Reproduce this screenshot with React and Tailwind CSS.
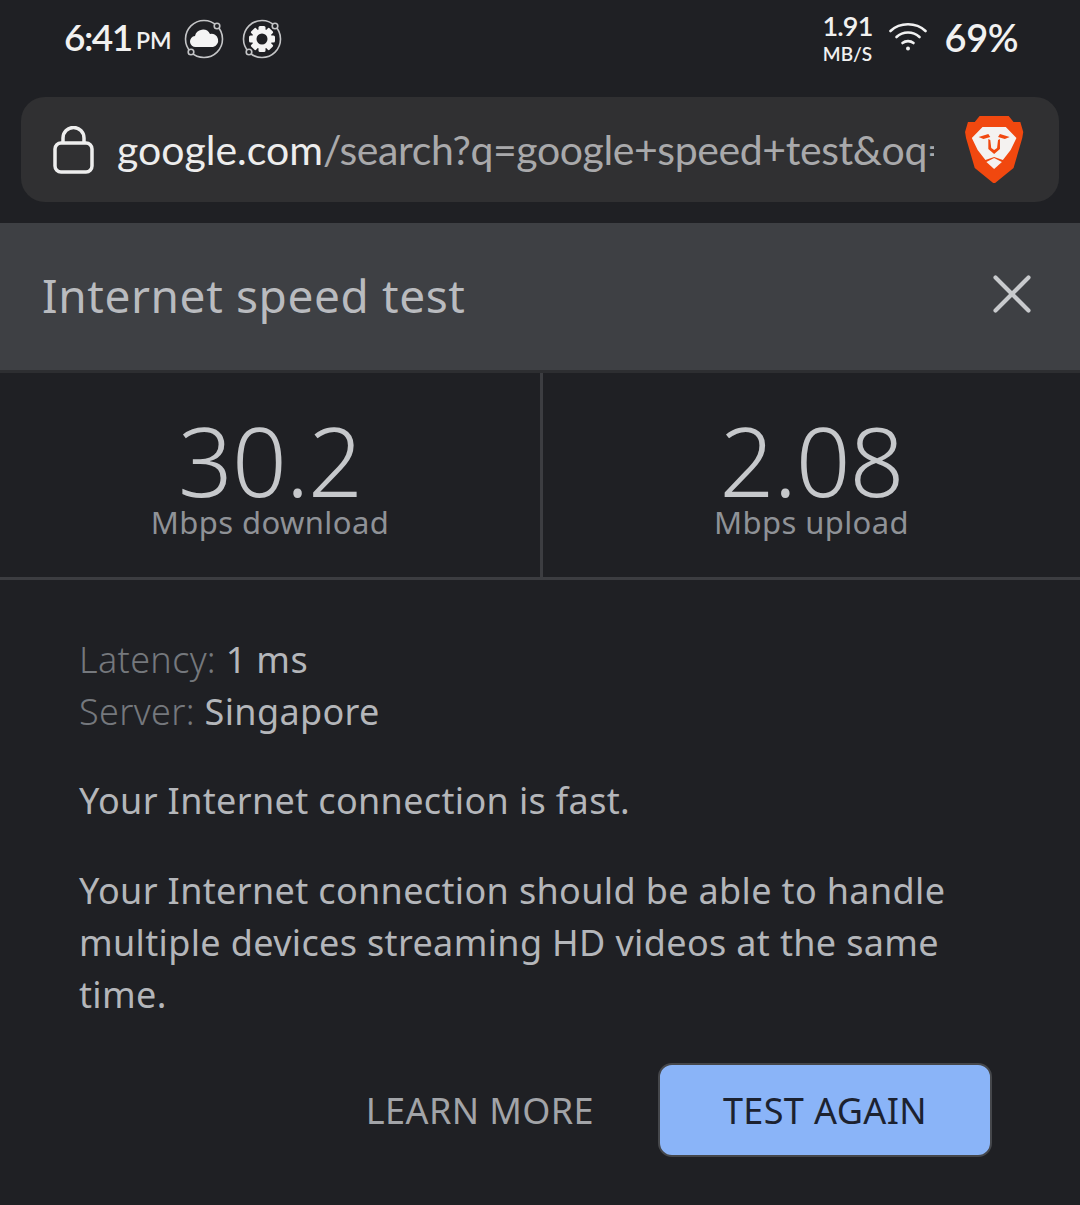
import React from 'react'
import { X } from 'lucide-react'

const Orbit = ({ children }) => (
  <svg width="42" height="42" viewBox="0 0 42 42" fill="none">
    <circle cx="21" cy="21" r="18.500" stroke="#c4c5c7" strokeWidth="1.600" />
    <circle cx="34" cy="8" r="2.800" fill="#1f2024" stroke="#c4c5c7" strokeWidth="1.600" />
    <circle cx="8" cy="34" r="2.800" fill="#1f2024" stroke="#c4c5c7" strokeWidth="1.600" />
    {children}
  </svg>
)

const GearIcon = () => (
  <g fill="#f4f4f4">
    {[0, 45, 90, 135].map((deg) => (
      <rect key={deg} x="17.500" y="8" width="7" height="26" rx="1.500" transform={`rotate(${deg} 21 21)`} />
    ))}
    <circle cx="21" cy="21" r="10" />
    <circle cx="21" cy="21" r="5.500" fill="#1f2024" />
  </g>
)

const BraveLogo = () => (
  <svg width="70" height="80" viewBox="0 0 70 80">
    <g transform="translate(0.200 0) scale(0.970 1)">
      <path d="M20 6H50L55 12H62L65 22L64 28L55 58L36 73H34L15 58L6 28L5 22L8 12H15Z" fill="#f1480f" />
      <path d="M23 17H47L58 28L52 40L44 50L35 47L26 50L18 40L12 28Z" fill="#f4f2f0" />
      <path d="M19 27L29 24L31 27L24 29ZM51 27L41 24L39 27L46 29ZM29 29L31 30L32 38L35 40L38 38L39 30L41 29L41 39L35 44L29 39Z" fill="#f1480f" />
      <path d="M27 52L35 48L43 52L35 59Z" fill="#f4f2f0" />
    </g>
  </svg>
)

const Stat = ({ value, label }) => (
  <div className="flex flex-col items-center pt-[39px]">
    <div className="text-[96px] leading-[96px] font-light tracking-[-1px] text-[#c6c8cb]">{value}</div>
    <div className="text-[31px] leading-[28px] tracking-[0.4px] text-[#8f9297]">{label}</div>
  </div>
)

export default function App() {
  return (
    <div className="w-[1080px] h-[1205px] overflow-hidden bg-[#1f2024] font-['Noto_Sans',sans-serif]">
      {/* status bar */}
      <div className="h-[97px] pl-[64px] pr-[62px] flex justify-between items-start text-[#f1f1f1] font-['Lato',sans-serif]">
        <div className="flex items-center pt-[12px]">
          <span className="w-[66px] text-[37px] leading-[44px] font-semibold tracking-[-1.5px] whitespace-nowrap">6:41</span>
          <span className="w-[35px] ml-[6px] mt-[6px] text-[23px] leading-[44px] font-semibold whitespace-nowrap">PM</span>
          <div className="ml-[12px] mt-[3px]">
            <Orbit>
              <path d="M13 29a5.500 5.500 0 0 1-1-11a8 8 0 0 1 15-2a6.500 6.500 0 0 1 3 13z" fill="#f4f4f4" />
            </Orbit>
          </div>
          <div className="ml-[16px] mt-[3px]">
            <Orbit>
              <GearIcon />
            </Orbit>
          </div>
        </div>
        <div className="flex items-start">
          <div className="flex flex-col items-center pt-[12px]">
            <span className="text-[27px] leading-[28px] font-semibold tracking-[-0.8px]">1.91</span>
            <span className="text-[19px] leading-[28px] font-semibold">MB/S</span>
          </div>
          <svg className="ml-[16px] mt-[21px]" width="38" height="30" viewBox="0 0 38 30" fill="none" stroke="#f1f1f1" strokeWidth="2.600" strokeLinecap="round">
            <path d="M1.500 10C11 1 27 1 36.500 10" />
            <path d="M7.500 16C14 10 24 10 30.500 16" />
            <path d="M13.500 22C16.500 19.500 21.500 19.500 24.500 22" />
            <circle cx="19" cy="27.500" r="2" fill="#f1f1f1" stroke="none" />
          </svg>
          <span className="ml-[18px] mt-[15px] text-[38px] leading-[44px] font-semibold tracking-[-0.5px]">69%</span>
        </div>
      </div>

      {/* url bar */}
      <div className="mx-[21px] h-[105px] rounded-[24px] bg-[#303032] flex items-center pl-[32px] pr-[29px]">
        <svg width="42" height="48" viewBox="0 0 42 48" fill="none" stroke="#eeeeee" strokeWidth="3.500" strokeLinejoin="round">
          <rect x="2" y="17" width="37" height="29" rx="6" />
          <path d="M10 17v-5a10.500 10.500 0 0 1 21 0v5" />
        </svg>
        <div className="ml-[22px] w-[817px] overflow-hidden whitespace-nowrap text-[41px] leading-[50px] tracking-[-0.4px] font-['Lato',sans-serif] text-[#a9a9ab]">
          <span className="text-[#ededed] tracking-[0px]">google.com</span>/search?q=google+speed+test&amp;oq=google
        </div>
        <div className="ml-auto">
          <BraveLogo />
        </div>
      </div>

      {/* card header */}
      <div className="mt-[21px] h-[147px] bg-[#3e4044] flex items-center justify-between pl-[42px] pr-[35px]">
        <span className="text-[46px] leading-[60px] tracking-[0.6px] text-[#b9bbbf] -mt-[4px]">Internet speed test</span>
        <X size={66} strokeWidth={1.500} color="#c8cacd" className="-mt-[6px]" />
      </div>

      {/* results */}
      <div className="h-[210px] border-t-[3px] border-t-[#2d2e31] border-b-[3px] border-b-[#3c3d41] grid grid-cols-2">
        <div className="relative">
          <Stat value="30.2" label="Mbps download" />
          <div className="absolute top-0 bottom-0 left-full w-[3px] bg-[#3c3d41]" />
        </div>
        <div className="pl-[3px]">
          <Stat value="2.08" label="Mbps upload" />
        </div>
      </div>

      {/* details */}
      <div className="pt-[54px] pl-[79px] pr-[120px] text-[36px] leading-[52px] tracking-[0.35px] text-[#b4b6ba]">
        <div><span className="text-[#75787d] font-light">Latency: </span>1 ms</div>
        <div><span className="text-[#75787d] font-light">Server: </span>Singapore</div>
        <p className="mt-[37px]">Your Internet connection is fast.</p>
        <p className="mt-[38px]">Your Internet connection should be able to handle multiple devices streaming HD videos at the same time.</p>
      </div>

      <div className="mt-[42px] pr-[88px] flex justify-end items-center">
        <span className="text-[36px] tracking-[0.4px] text-[#a2a4a8] mr-[64px] pt-[2px]">LEARN MORE</span>
        <button className="w-[334px] h-[94px] rounded-[14px] border-2 border-[#45474b] bg-[#8ab4f8] text-[36px] tracking-[0.4px] text-[#1c2230] pt-[2px]">TEST AGAIN</button>
      </div>
    </div>
  )
}
